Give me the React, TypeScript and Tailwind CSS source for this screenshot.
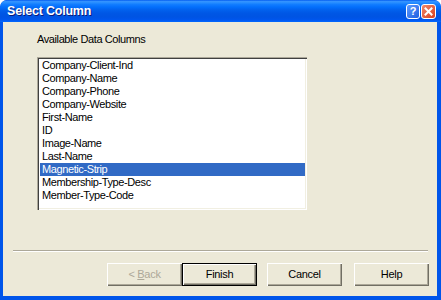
import React from "react";

const items = [
  "Company-Client-Ind",
  "Company-Name",
  "Company-Phone",
  "Company-Website",
  "First-Name",
  "ID",
  "Image-Name",
  "Last-Name",
  "Magnetic-Strip",
  "Membership-Type-Desc",
  "Member-Type-Code",
];

const font = { fontFamily: '"Liberation Sans", Arial, sans-serif' };

function Btn({ label, disabled, isDefault, underline }: { label: string; disabled?: boolean; isDefault?: boolean; underline?: number }) {
  const text =
    underline !== undefined ? (
      <span className="whitespace-pre">
        {label.slice(0, underline)}
        <span className="underline">{label[underline]}</span>
        {label.slice(underline + 1)}
      </span>
    ) : (
      <span>{label}</span>
    );
  return (
    <div
      className={
        "w-[75px] h-[23px] flex items-center justify-center text-[11px] tracking-[-0.3px] bg-[#ece9d8] " +
        (isDefault
          ? "border border-black shadow-[inset_1px_1px_0_#ffffff,inset_-1px_-1px_0_#716f64,inset_-2px_-2px_0_#aca899] "
          : "shadow-[inset_1px_1px_0_#ffffff,inset_-1px_-1px_0_#716f64,inset_-2px_-2px_0_#aca899] ") +
        (disabled ? "text-[#aca899]" : "text-black")
      }
    >
      {text}
    </div>
  );
}

export default function App() {
  return (
    <div className="w-[441px] h-[300px] bg-[#0055ea] rounded-t-[7px] flex flex-col overflow-hidden" style={font}>
      <div className="h-[22px] shrink-0 relative rounded-t-[7px] bg-[linear-gradient(to_bottom,#0058ee_0%,#3593ff_6%,#288eff_12%,#127dff_20%,#036ffc_32%,#0262ee_44%,#0057e5_60%,#0054e3_76%,#0055eb_88%,#005bf5_94%,#026afe_100%)]">
        <div className="absolute left-[7px] top-[3px] text-white font-bold text-[12.5px] tracking-[-0.2px] leading-[16px] [text-shadow:1px_1px_0_#0a1a7a]">
          Select Column
        </div>
        <div className="absolute left-[406px] top-[4px] w-[14px] h-[15px] rounded-[3px] border border-white bg-[linear-gradient(135deg,#5f9bff,#1f5fe0)] flex items-center justify-center text-white font-bold text-[11px] leading-none">
          ?
        </div>
        <div className="absolute left-[421px] top-[4px] w-[15px] h-[15px] rounded-[3px] border border-white bg-[linear-gradient(135deg,#f0876a,#d8401e)] flex items-center justify-center">
          <svg width="9" height="9" viewBox="0 0 9 9">
            <path d="M1.5 1.5 L7.5 7.5 M7.5 1.5 L1.5 7.5" stroke="white" strokeWidth="2" strokeLinecap="square" />
          </svg>
        </div>
      </div>
      <div className="flex-1 ml-[3px] mr-[4px] mb-[4px] bg-[#ece9d8] flex flex-col">
        <div className="pl-[34px] pt-[11px] h-[24px] text-[11px] leading-[13px] tracking-[-0.4px] text-black">
          Available Data Columns
        </div>
        <div className="ml-[34px] mt-[11px] w-[270px] h-[153px] bg-white shadow-[inset_1px_1px_0_#aca899,inset_2px_2px_0_#404040,inset_-1px_-1px_0_#ffffff,inset_-2px_-2px_0_#f1efe2] pt-[2px] pl-[3px] pr-[2px]">
          {items.map((it) => (
            <div
              key={it}
              className={
                "h-[13px] leading-[13px] text-[11px] tracking-[-0.4px] pl-[2px] " +
                (it === "Magnetic-Strip" ? "bg-[#316ac5] text-white" : "text-black")
              }
            >
              {it}
            </div>
          ))}
        </div>
        <div className="ml-[10px] mr-[9px] mt-[40px] h-[2px] border-t border-[#aca899] border-b border-b-white" />
        <div className="mt-[11px] flex pl-[104px]">
          <Btn label="< Back" disabled underline={2} />
          <Btn label="Finish" isDefault />
          <div className="w-[10px]" />
          <Btn label="Cancel" />
          <div className="w-[12px]" />
          <Btn label="Help" />
        </div>
      </div>
    </div>
  );
}
